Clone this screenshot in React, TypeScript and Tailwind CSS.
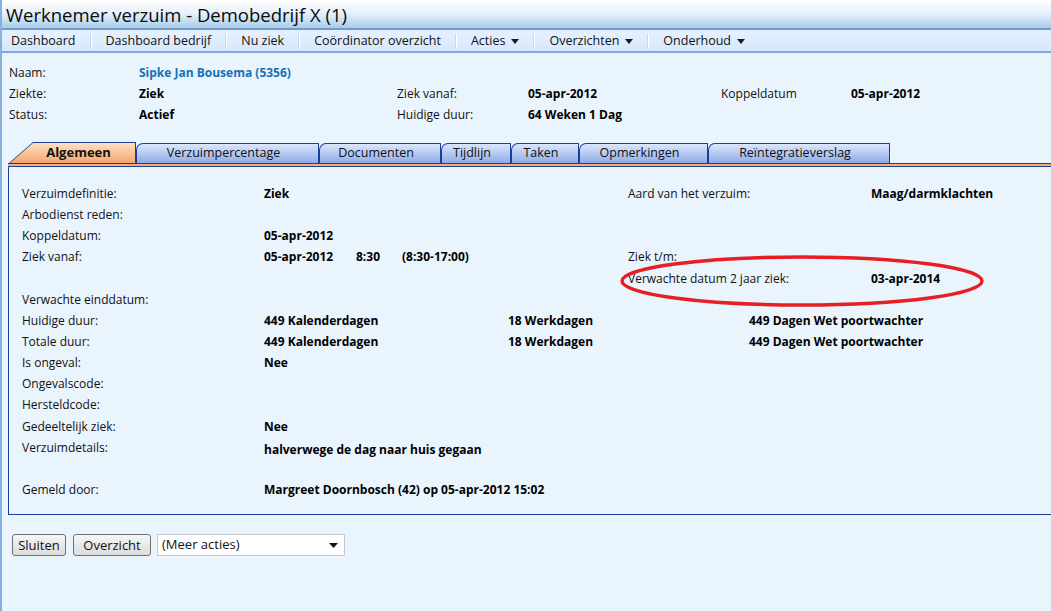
import React from "react";

const font = "font-['Open_Sans','Noto_Sans',sans-serif]";

function MenuItem({ label, caret }: { label: string; caret?: boolean }) {
  return (
    <div className="flex items-center gap-[6px]">
      <span>{label}</span>
      {caret && (
        <svg width="8" height="5" viewBox="0 0 8 5" className="mt-[1px]">
          <polygon points="0,0 8,0 4,5" fill="#1a1a1a" />
        </svg>
      )}
    </div>
  );
}

function Sep() {
  return <div className="w-[2px] h-[15px] bg-[#c0d8f3] border-r border-white" />;
}

function Tab({ label, w }: { label: string; w: string }) {
  return (
    <div
      className={`${w} h-[20px] border border-b-0 border-[#1b3f98] rounded-tl-[7px] rounded-tr-[1px] bg-gradient-to-b from-[#dde7fb] via-[#b5c9f2] to-[#8fabe7] flex items-center justify-center pr-[8px] text-[12.5px] text-[#111]`}
    >
      {label}
    </div>
  );
}

export default function App() {
  const L = "text-[#111]";
  const V = "font-bold text-[#000]";
  return (
    <div className={`${font} w-[1051px] h-[611px] bg-[#eaf4fd] border-l-2 border-[#86b0e0] overflow-hidden text-[12px] text-[#111] relative`}>
      {/* Title bar */}
      <div className="h-[30px] bg-gradient-to-b from-[#ffffff] via-[#e3f0fb] to-[#a9cbe9] border-b-2 border-[#6d9bd4] flex items-center pl-[4px] pt-[3px]">
        <span className="text-[18.5px] leading-none text-[#0a0a0a]">Werknemer verzuim - Demobedrijf X (1)</span>
      </div>
      {/* Menu bar */}
      <div className="h-[23px] bg-gradient-to-b from-[#e6f1ff] to-[#d6e8fd] border-b-2 border-[#7ea9de] flex items-center pl-[9px] gap-[14px] text-[12.5px] text-[#111] pt-[1px]">
        <MenuItem label="Dashboard" />
        <Sep />
        <MenuItem label="Dashboard bedrijf" />
        <Sep />
        <MenuItem label="Nu ziek" />
        <Sep />
        <MenuItem label="Coördinator overzicht" />
        <Sep />
        <MenuItem label="Acties" caret />
        <Sep />
        <MenuItem label="Overzichten" caret />
        <Sep />
        <MenuItem label="Onderhoud" caret />
      </div>

      {/* Header info */}
      <div className="grid grid-cols-[130px_258px_131px_193px_130px_1fr] pl-[7px] pt-[9px] leading-[21px] text-[12px]">
        <div className={L}>Naam:</div>
        <div className="font-bold text-[#1570b8] col-span-5">Sipke Jan Bousema (5356)</div>
        <div className={L}>Ziekte:</div>
        <div className={V}>Ziek</div>
        <div className={L}>Ziek vanaf:</div>
        <div className={V}>05-apr-2012</div>
        <div className={L}>Koppeldatum</div>
        <div className={V}>05-apr-2012</div>
        <div className={L}>Status:</div>
        <div className={V}>Actief</div>
        <div className={L}>Huidige duur:</div>
        <div className={`${V} col-span-3`}>64 Weken 1 Dag</div>
      </div>

      {/* Tabs */}
      <div className="mt-[17px] pl-[6px]">
        <div className="flex items-end pl-[1px]">
          <div className="w-[127px] h-[21px] bg-[#1b3f98] p-[1px] pb-0 [clip-path:polygon(0_100%,24px_0,100%_0,100%_100%)]">
            <div className="h-full bg-gradient-to-b from-[#fde0c6] via-[#f9c497] to-[#f3a66b] [clip-path:polygon(0_100%,23px_0,100%_0,100%_100%)] flex items-center justify-center pl-[12px] text-[13px] font-bold text-[#111]">
              Algemeen
            </div>
          </div>
          <Tab label="Verzuimpercentage" w="w-[183px]" />
          <Tab label="Documenten" w="w-[122px]" />
          <Tab label="Tijdlijn" w="w-[70px]" />
          <Tab label="Taken" w="w-[68px]" />
          <Tab label="Opmerkingen" w="w-[129px]" />
          <Tab label="Reïntegratieverslag" w="w-[182px]" />
        </div>
        {/* Panel */}
        <div className="border-t border-[#1b3f98]">
          <div className="h-[2px] bg-[#f7ad78]" />
          <div className="border-t border-l border-b border-[#1b3f98] h-[349px] relative pl-[13px] pt-[16px]">
            <div className="grid grid-cols-[242px_244px_120px_121px_122px_1fr] auto-rows-[21.15px] leading-[21.15px] text-[12px]">
              {/* row 1 */}
              <div>Verzuimdefinitie:</div>
              <div className={V}>Ziek</div>
              <div />
              <div className="col-span-2">Aard van het verzuim:</div>
              <div className={V}>Maag/darmklachten</div>
              {/* row 2 */}
              <div className="col-span-6">Arbodienst reden:</div>
              {/* row 3 */}
              <div>Koppeldatum:</div>
              <div className={`${V} col-span-5`}>05-apr-2012</div>
              {/* row 4 */}
              <div>Ziek vanaf:</div>
              <div className={`${V} col-span-2 flex`}>
                <span className="w-[92px]">05-apr-2012</span>
                <span className="w-[46px]">8:30</span>
                <span>(8:30-17:00)</span>
              </div>
              <div className="col-span-3">Ziek t/m:</div>
              {/* row 5 */}
              <div className="col-span-3" />
              <div className="col-span-2">Verwachte datum 2 jaar ziek:</div>
              <div className={V}>03-apr-2014</div>
              {/* row 6 */}
              <div className="col-span-6">Verwachte einddatum:</div>
              {/* row 7 */}
              <div>Huidige duur:</div>
              <div className={V}>449 Kalenderdagen</div>
              <div className={`${V} col-span-2`}>18 Werkdagen</div>
              <div className={`${V} col-span-2`}>449 Dagen Wet poortwachter</div>
              {/* row 8 */}
              <div>Totale duur:</div>
              <div className={V}>449 Kalenderdagen</div>
              <div className={`${V} col-span-2`}>18 Werkdagen</div>
              <div className={`${V} col-span-2`}>449 Dagen Wet poortwachter</div>
              {/* row 9 */}
              <div>Is ongeval:</div>
              <div className={`${V} col-span-5`}>Nee</div>
              {/* row 10 */}
              <div className="col-span-6">Ongevalscode:</div>
              <div className="col-span-6">Hersteldcode:</div>
              <div>Gedeeltelijk ziek:</div>
              <div className={`${V} col-span-5`}>Nee</div>
              <div>Verzuimdetails:</div>
              <div className={`${V} col-span-5 pt-[2px]`}>halverwege de dag naar huis gegaan</div>
              <div className="col-span-6" />
              <div>Gemeld door:</div>
              <div className={`${V} col-span-5`}>Margreet Doornbosch (42) op 05-apr-2012 15:02</div>
            </div>
            {/* red ellipse annotation */}
            <svg className="absolute left-[610px] top-[87px]" width="366" height="54" viewBox="0 0 366 54">
              <ellipse cx="183" cy="27" rx="180" ry="24" fill="none" stroke="#e81e25" strokeWidth="3.4" />
            </svg>
          </div>
        </div>
      </div>

      {/* Bottom buttons */}
      <div className="flex items-center pl-[10px] mt-[19px] text-[13px]">
        <button className="h-[22px] w-[54px] border border-[#707070] rounded-[3px] bg-gradient-to-b from-[#f6f6f6] to-[#dcdcdc] text-[#111] leading-none">Sluiten</button>
        <button className="ml-[7px] h-[22px] w-[78px] border border-[#707070] rounded-[3px] bg-gradient-to-b from-[#f6f6f6] to-[#dcdcdc] text-[#111] leading-none">Overzicht</button>
        <div className="ml-[6px] h-[22px] w-[188px] border border-[#c5c8cf] bg-white flex items-center justify-between pl-[4px] pr-[6px] text-[#111]">
          <span>(Meer acties)</span>
          <svg width="9" height="5" viewBox="0 0 9 5"><polygon points="0,0 9,0 4.5,5" fill="#111" /></svg>
        </div>
      </div>
    </div>
  );
}
